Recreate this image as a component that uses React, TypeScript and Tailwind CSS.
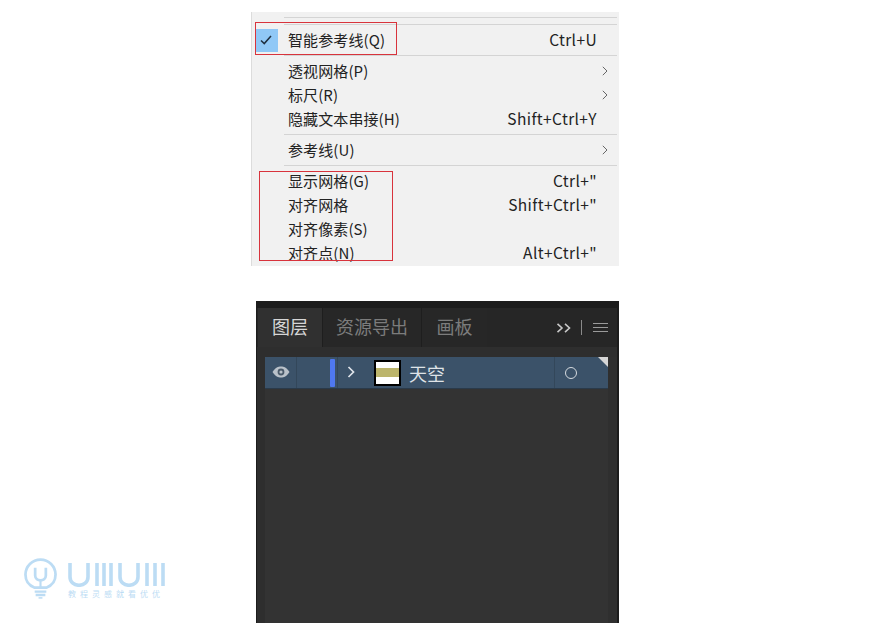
const cjk = "font-['Noto_Sans_CJK_SC','Noto_Sans',sans-serif]";

function Chevron() {
  return (
    <svg width="6" height="10" viewBox="0 0 6 10" fill="none" stroke="#666" strokeWidth="1" className="ml-[5px] mr-[11px] shrink-0">
      <path d="M0.8 0.8 L5 5 L0.8 9.2" />
    </svg>
  );
}

function Item({ label, shortcut, sub }: { label: string; shortcut?: string; sub?: boolean }) {
  return (
    <div className="flex h-[24px] items-center pl-[36px] text-[#222] whitespace-nowrap">
      <span className="flex-1 text-[15px] tracking-[0.1px]">{label}</span>
      {shortcut && <span className="mr-[22px] text-[15.5px] tracking-[0.4px]">{shortcut}</span>}
      {sub && <Chevron />}
    </div>
  );
}

function Sep({ className = "" }: { className?: string }) {
  return <div className={`ml-[32px] mr-[2px] h-px bg-[#d4d4d4] ${className}`} />;
}

function Menu() {
  return (
    <div className={`relative h-[254px] w-[368px] border-l border-[#dcdcdc] bg-[#f1f1f1] pt-[5px] ${cjk}`}>
      <Sep />
      <Sep className="mt-[6px]" />
      <div className="mt-[3px] flex h-[24px] items-center text-[#222]">
        <div className="ml-[4px] flex h-[23px] w-[22px] items-center justify-center bg-[#90c8f6]">
          <svg width="12" height="10" viewBox="0 0 13 11" fill="none" stroke="#1f2f3f" strokeWidth="1.7" className="-ml-[2px]">
            <path d="M1 6 L4.6 9.4 L12 1.2" />
          </svg>
        </div>
        <span className="ml-[10px] flex-1 text-[15px] tracking-[0.1px]">智能参考线(Q)</span>
        <span className="mr-[22px] text-[15.5px] tracking-[0.4px]">Ctrl+U</span>
      </div>
      <Sep className="mt-[3px]" />
      <div className="pt-[3px]">
        <Item label="透视网格(P)" sub />
        <Item label="标尺(R)" sub />
        <Item label="隐藏文本串接(H)" shortcut="Shift+Ctrl+Y" />
      </div>
      <Sep className="mt-[3px]" />
      <div className="pt-[3px]">
        <Item label="参考线(U)" sub />
      </div>
      <Sep className="mt-[3px]" />
      <div className="pt-[3px]">
        <Item label="显示网格(G)" shortcut={'Ctrl+"'} />
        <Item label="对齐网格" shortcut={'Shift+Ctrl+"'} />
        <Item label="对齐像素(S)" />
        <Item label="对齐点(N)" shortcut={'Alt+Ctrl+"'} />
      </div>
      <div className="absolute left-[3px] top-[10px] h-[33px] w-[142px] border border-[#d8333c]" />
      <div className="absolute left-[7px] top-[159px] h-[90px] w-[134px] border border-[#d8333c]" />
    </div>
  );
}

function Tab({ label, active, w }: { label: string; active?: boolean; w: string }) {
  return (
    <div
      className={`flex h-[40px] items-center justify-center pb-[3px] text-[18px] ${w} ${
        active ? "bg-[#303030] text-[#d6d6d6]" : "bg-[#272727] text-[#7c7c7c]"
      }`}
    >
      {label}
    </div>
  );
}

function Panel() {
  return (
    <div className={`flex h-[322px] w-[363px] flex-col border-l border-r-2 border-[#1c1c1c] bg-[#333] ${cjk}`}>
      <div className="h-[7px] shrink-0 bg-[#1c1c1c]" />
      <div className="flex h-[39px] shrink-0 items-stretch bg-[#262626] pl-[1px]">
        <Tab label="图层" active w="w-[64px]" />
        <div className="w-px bg-[#1e1e1e]" />
        <Tab label="资源导出" w="w-[98px]" />
        <div className="w-px bg-[#1e1e1e]" />
        <Tab label="画板" w="w-[65px]" />
        <div className="flex flex-1 items-center pl-[69px]">
          <svg width="16" height="10" viewBox="0 0 16 10" fill="none" stroke="#c8c8c8" strokeWidth="1.6" className="shrink-0">
            <path d="M1.5 0.8 L6 5 L1.5 9.2 M9 0.8 L13.5 5 L9 9.2" />
          </svg>
          <div className="ml-[9px] h-[15px] w-px shrink-0 bg-[#8a8a8a]" />
          <div className="ml-[11px] flex w-[15px] shrink-0 flex-col gap-[3px]">
            <div className="h-px bg-[#9a9a9a]" />
            <div className="h-px bg-[#9a9a9a]" />
            <div className="h-px bg-[#9a9a9a]" />
          </div>
        </div>
      </div>
      <div className="flex flex-1 bg-[#2e2e2e] pl-[8px] pt-[10px]">
        <div className="flex-1 bg-[#333]">
          <div className="relative flex h-[32px] items-center border-b border-[#2a3a4a] bg-[#3b5269]">
            <div className="flex h-full w-[32px] items-center justify-center border-r border-[#33475a]">
              <svg width="18" height="12" viewBox="0 0 18 12" className="-mt-[2px]">
                <path d="M0.5 6 C3.5 1.5 6 0.5 9 0.5 C12 0.5 14.5 1.5 17.5 6 C14.5 10.5 12 11.5 9 11.5 C6 11.5 3.5 10.5 0.5 6 Z" fill="#b9c1c9" />
                <circle cx="9" cy="6" r="3.4" fill="#4a5a6a" />
                <circle cx="9" cy="6" r="1.6" fill="#b9c1c9" />
              </svg>
            </div>
            <div className="flex h-full w-[41px] items-center justify-end border-r border-[#33475a]">
              <div className="mr-[2px] h-[28px] w-[5px] rounded-[1px] bg-[#4f78f0]" />
            </div>
            <svg width="8" height="12" viewBox="0 0 8 12" fill="none" stroke="#dfe4ea" strokeWidth="1.7" className="ml-[9px] -mt-[1px]">
              <path d="M1.5 1 L6.5 6 L1.5 11" />
            </svg>
            <div className="ml-[19px] flex h-[26px] w-[27px] flex-col justify-center border-2 border-black bg-white">
              <div className="h-[9px] bg-[#bcb56c]" />
            </div>
            <span className="ml-[8px] flex-1 pt-[1px] text-[18px] text-[#dfe3e7]">天空</span>
            <div className="flex h-full w-[54px] items-center border-l border-[#33475a] pl-[10px]">
              <div className="h-[12px] w-[12px] rounded-full border-[1.5px] border-[#d5dadf]" />
            </div>
            <svg width="10" height="10" viewBox="0 0 10 10" className="absolute right-0 top-0">
              <path d="M0 0 H10 V10 Z" fill="#d6d6d6" />
            </svg>
          </div>
        </div>
        <div className="w-[9px] bg-[#2f2f2f]" />
      </div>
    </div>
  );
}

function Logo() {
  return (
    <div className={`flex items-start text-[#bcdcf4] ${cjk}`}>
      <svg width="33" height="41" viewBox="0 0 34 42" fill="none" stroke="#bcdcf4" strokeWidth="2.8" className="shrink-0 blur-[0.3px]">
        <path d="M11 30.5 C4 28 1.5 22.5 1.5 17 C1.5 8.5 8.5 1.5 17 1.5 C25.5 1.5 32.5 8.5 32.5 17 C32.5 22.5 30 28 23 30.5 Z" />
        <path d="M11.5 10 V18 C11.5 24.5 22.5 24.5 22.5 18 V10" />
        <path d="M17 23 V30.5" strokeWidth="2.2" />
        <path d="M11 34.5 H23 M12 38 H22" strokeWidth="2.4" />
        <path d="M15 41 H19" strokeWidth="1.6" />
      </svg>
      <div className="ml-[11px] mt-[4px] flex flex-col">
        <svg width="98" height="25" viewBox="0 0 98 25" fill="none" stroke="#bcdcf4" strokeWidth="3.6" className="blur-[0.3px]">
          <path d="M2 1 V15 C2 26 20 26 20 15 V1" />
          <path d="M29 1 V24 M36 1 V24 M43 1 V24" />
          <path d="M52 1 V15 C52 26 70 26 70 15 V1" />
          <path d="M79 1 V24 M87 1 V24 M95 1 V24" />
        </svg>
        <span className="mt-[2px] whitespace-nowrap text-[8px] leading-[10px] tracking-[4px]">教程灵感就看优优</span>
      </div>
    </div>
  );
}

export default function App() {
  return (
    <div className="flex h-[623px] w-[870px] overflow-hidden bg-white">
      <div className="flex w-[251px] shrink-0 flex-col justify-end pb-[24px] pl-[24px]">
        <Logo />
      </div>
      <div className="flex w-[368px] shrink-0 flex-col items-end pt-[12px]">
        <Menu />
        <div className="mt-[35px]">
          <Panel />
        </div>
      </div>
    </div>
  );
}
